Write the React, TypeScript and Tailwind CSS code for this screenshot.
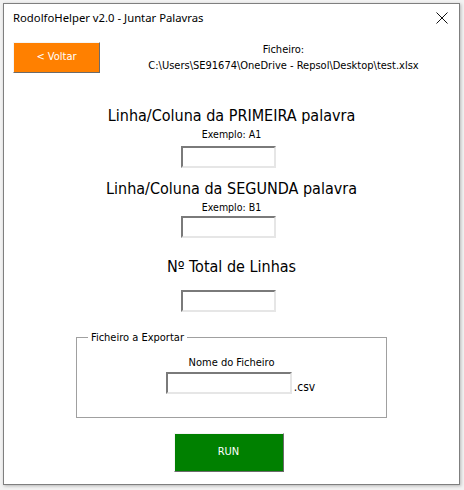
import { ReactElement } from "react";

const tahoma = { fontFamily: '"DejaVu Sans Condensed", "DejaVu Sans", Verdana, sans-serif' };

const Sunken = (props: { w: string }): ReactElement => (
  <div
    className={`${props.w} h-[22px] bg-white border-2 border-t-[#7a7a7a] border-l-[#7a7a7a] border-b-[#e6e6e6] border-r-[#e6e6e6]`}
  />
);

const Heading = (props: { text: string; mt: string }): ReactElement => (
  <div className={`${props.mt} text-[16px] leading-[18px] text-black`}>{props.text}</div>
);

const Hint = (props: { text: string; mt: string }): ReactElement => (
  <div className={`${props.mt} text-[10.5px] leading-[12px] text-black`}>{props.text}</div>
);

const App = (): ReactElement => {
  return (
    <div className="w-[464px] h-[490px] bg-[#f2f2f2] pt-[3px] pl-[3px]" style={tahoma}>
      <div className="w-[457px] h-[482px] bg-white border border-[#7f7f7f] shadow-[1px_1px_3px_rgba(0,0,0,0.25)] flex flex-col">
        {/* title bar */}
        <div className="h-[28px] flex items-center justify-between pl-[9px] pr-[10px]">
          <span className="text-[11.3px] text-black" style={{ fontFamily: '"Noto Sans", "Open Sans", sans-serif' }}>
            RodolfoHelper v2.0 - Juntar Palavras
          </span>
          <svg width="12" height="12" viewBox="0 0 12 12" className="mr-[1px]">
            <path d="M0.5 0.5 L11.5 11.5 M11.5 0.5 L0.5 11.5" stroke="#111" strokeWidth="1" />
          </svg>
        </div>

        {/* top row */}
        <div className="mt-[10px] flex">
          <button className="ml-[9px] w-[87px] h-[31px] bg-[#ff8000] text-white text-[11px] border border-t-[#f5f5f5] border-l-[#f5f5f5] border-b-[#6b6b6b] border-r-[#6b6b6b]">
            &lt; Voltar
          </button>
          <div className="flex-1 pl-[8px] text-center text-[11px] leading-[16px] text-black">
            <div>Ficheiro:</div>
            <div>C:\Users\SE91674\OneDrive - Repsol\Desktop\test.xlsx</div>
          </div>
        </div>

        {/* form */}
        <div className="flex flex-col items-center">
          <Heading text="Linha/Coluna da PRIMEIRA palavra" mt="mt-[33px]" />
          <Hint text="Exemplo: A1" mt="mt-[3px]" />
          <div className="mt-[6px] -ml-[6px]"><Sunken w="w-[95px]" /></div>

          <Heading text="Linha/Coluna da SEGUNDA palavra" mt="mt-[12px]" />
          <Hint text="Exemplo: B1" mt="mt-[3px]" />
          <div className="mt-[3px] -ml-[6px]"><Sunken w="w-[95px]" /></div>

          <Heading text="Nº Total de Linhas" mt="mt-[20px]" />
          <div className="mt-[14px] -ml-[6px]"><Sunken w="w-[95px]" /></div>

          <fieldset className="mt-[19px] w-[311px] h-[87px] border border-[#a0a0a0] px-[10px] pt-0 flex flex-col items-center">
            <legend className="ml-[1px] px-[3px] text-[11px] leading-[13px] text-black">Ficheiro a Exportar</legend>
            <div className="mt-[12px] text-[11px] leading-[13px] text-black">Nome do Ficheiro</div>
            <div className="mt-[3px] flex items-end ml-[18px]">
              <Sunken w="w-[126px]" />
              <span className="ml-[2px] text-[12px] leading-[14px] text-black">.csv</span>
            </div>
          </fieldset>

          <button className="mt-[15px] -ml-[6px] w-[110px] h-[39px] bg-[#008000] text-white text-[11px] border border-t-[#f5f5f5] border-l-[#f5f5f5] border-b-[#6b6b6b] border-r-[#6b6b6b]">
            RUN
          </button>
        </div>
      </div>
    </div>
  );
};

export default App;
